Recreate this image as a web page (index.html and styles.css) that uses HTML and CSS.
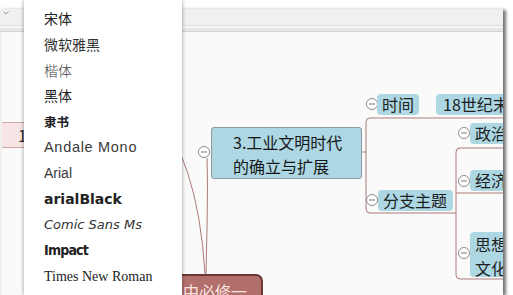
FILE: index.html
```html
<!DOCTYPE html>
<html lang="zh-CN">
<head>
<meta charset="utf-8">
<title>思维导图 字体菜单</title>
<link rel="stylesheet" href="styles.css">
</head>
<body>
<div class="window">
  <div class="toolbar">
    <svg class="tb-chevron" width="6" height="4" viewBox="0 0 6 4"><path d="M0.5 0.5 L3 3 L5.5 0.5" fill="none" stroke="#9a9a9a" stroke-width="1"/></svg>
  </div>
  <div class="canvas">
    <svg class="links" width="503" height="263" viewBox="0 32 503 263">
      <g fill="none" stroke="#a97a78" stroke-width="1">
        <path d="M150 106 Q198 156 205 274"/>
        <path d="M206 274 C207 230 208 190 207 158"/>
        <path d="M361 152 H366"/>
        <path d="M503 118 H370 Q366 118 366 122 V209 Q366 213 370 213 H456"/>
        <path d="M503 148 H460 Q456 148 456 152 V275 Q456 279 460 279 H503"/>
        <path d="M456 193 H503"/>
      </g>
      <g class="toggles" fill="#fff" stroke="#8c8c8c" stroke-width="1">
        <circle cx="204" cy="152" r="5.5"/>
        <circle cx="372" cy="104" r="5.5"/>
        <circle cx="372" cy="200" r="5.5"/>
        <circle cx="464" cy="133" r="5.5"/>
        <circle cx="464" cy="181" r="5.5"/>
        <circle cx="464" cy="253" r="5.5"/>
      </g>
      <g stroke="#777" stroke-width="1">
        <path d="M201 152 H207"/>
        <path d="M369 104 H375"/>
        <path d="M369 200 H375"/>
        <path d="M461 133 H467"/>
        <path d="M461 181 H467"/>
        <path d="M461 253 H467"/>
      </g>
    </svg>

    <div class="node pink-node">1.工业文明</div>
    <div class="node topic-main">3.工业文明时代<br>的确立与扩展</div>
    <div class="node root">高中必修一</div>

    <div class="node label lbl-time">时间</div>
    <div class="node label lbl-century">18世纪末</div>
    <div class="node label lbl-branch">分支主题</div>
    <div class="node label lbl-politics">政治</div>
    <div class="node label lbl-economy">经济</div>
    <div class="node label lbl-culture">思想<br>文化</div>
  </div>
</div>

<ul class="font-menu">
  <li class="f-song">宋体</li>
  <li class="f-yahei">微软雅黑</li>
  <li class="f-kai">楷体</li>
  <li class="f-hei">黑体</li>
  <li class="f-li">隶书</li>
  <li class="f-andale">Andale Mono</li>
  <li class="f-arial">Arial</li>
  <li class="f-black">arialBlack</li>
  <li class="f-comic">Comic Sans Ms</li>
  <li class="f-impact">Impact</li>
  <li class="f-times">Times New Roman</li>
</ul>
</body>
</html>
```

FILE: styles.css
```css
html, body {
  margin: 0;
  padding: 0;
}

body {
  width: 513px;
  height: 295px;
  overflow: hidden;
  background: #ffffff;
  position: relative;
  font-family: "Noto Sans CJK SC", "Liberation Sans", sans-serif;
}

.window {
  margin-top: 9px;
  width: 503px;
  height: 286px;
  display: flex;
  flex-direction: column;
  background: #fafafa;
  box-shadow: 3px 1px 3px rgba(0, 0, 0, 0.55);
}

.toolbar {
  height: 22px;
  flex: none;
  background: linear-gradient(#f0f0f0 0 16px, #dedede 16px 17px, #f6f6f6 17px 19px, #e6e6e6 19px);
  border-bottom: 1px solid #d4d4d4;
  position: relative;
}

.tb-chevron {
  display: block;
  margin: 2px 0 0 3px;
}

.canvas {
  flex: 1;
  position: relative;
  overflow: hidden;
  background: #fafafa;
  border-left: 2px solid #f0f0f0;
}

.links {
  position: absolute;
  left: -2px;
  top: 0;
}

.node {
  position: absolute;
  box-sizing: border-box;
  color: #1e1e1e;
  font-size: 16px;
  white-space: nowrap;
}

/* canvas origin = page (2, 32) */
.pink-node {
  left: -62px;
  top: 90px;
  width: 110px;
  height: 26px;
  padding-left: 78px;
  line-height: 24px;
  background: #f7e5e5;
  border-top: 1px solid #cfa8a8;
  border-bottom: 1px solid #cfa8a8;
  color: #2a2a2a;
}

.topic-main {
  left: 209px;
  top: 95px;
  width: 151px;
  height: 52px;
  padding: 2px 0 0 21px;
  line-height: 24px;
  background: #acd7e3;
  border: 1px solid #8b9ba0;
  border-radius: 3px;
  color: #161616;
}

.root {
  left: 148px;
  top: 242px;
  width: 113px;
  height: 34px;
  padding: 4px 0 0 15px;
  line-height: 22px;
  background: #b26f6b;
  border: 2px solid #6c3735;
  border-radius: 0 7px 0 0;
  color: #fae4e2;
}

.label {
  height: 21px;
  line-height: 21px;
  background: #acd7e3;
  border-radius: 4px;
  padding-left: 5px;
}

.lbl-time {
  left: 375px;
  top: 62px;
  width: 42px;
}

.lbl-century {
  left: 434px;
  top: 62px;
  width: 90px;
  padding-left: 7px;
}

.lbl-branch {
  left: 376px;
  top: 158px;
  width: 75px;
  padding-left: 5px;
}

.lbl-politics {
  left: 468px;
  top: 91px;
  width: 50px;
}

.lbl-economy {
  left: 468px;
  top: 138px;
  width: 50px;
}

.lbl-culture {
  left: 468px;
  top: 200px;
  width: 50px;
  height: 45px;
  line-height: 24px;
}

/* dropdown font menu */
.font-menu {
  position: absolute;
  left: 24px;
  top: 0;
  width: 158px;
  height: 295px;
  margin: 0;
  padding: 6px 0 0 0;
  box-sizing: border-box;
  list-style: none;
  background: #ffffff;
  box-shadow: 0 0 4px rgba(0, 0, 0, 0.4);
  color: #333333;
}

.font-menu li {
  height: 25.8px;
  line-height: 25.8px;
  padding-left: 20px;
  font-size: 14px;
  white-space: nowrap;
  overflow: hidden;
}

.f-song { font-family: "Noto Sans CJK SC", sans-serif; color: #222; }
.f-yahei { font-family: "Noto Sans CJK SC", sans-serif; color: #333; }
.f-kai { font-family: "Noto Sans CJK SC", sans-serif; font-weight: 300; color: #444; }
.f-hei { font-family: "Noto Sans CJK SC", sans-serif; color: #222; }
.f-li { font-family: "Noto Sans CJK SC", sans-serif; font-weight: 700; font-size: 12.5px !important; color: #222; }
.f-andale { font-family: "Liberation Sans", sans-serif; letter-spacing: 0.7px; font-size: 14.5px !important; color: #3a3a3a; }
.f-arial { font-family: "Liberation Sans", sans-serif; color: #3a3a3a; }
.f-black { font-family: "DejaVu Sans", sans-serif; font-weight: 700; color: #222; }
.f-comic { font-family: "DejaVu Sans", sans-serif; font-style: italic; font-size: 13px !important; color: #333; }
.f-impact { font-family: "DejaVu Sans Condensed", "DejaVu Sans", sans-serif; font-weight: 700; letter-spacing: -0.8px; color: #222; }
.f-times { font-family: "Liberation Serif", serif; color: #222; }
```
